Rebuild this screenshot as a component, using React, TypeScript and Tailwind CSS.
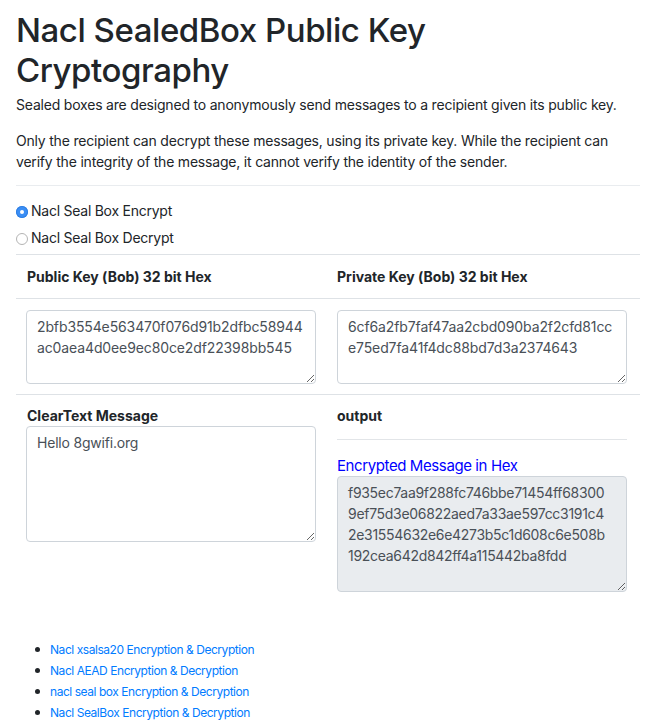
import React from 'react';

const publicKey = '2bfb3554e563470f076d91b2dfbc58944\nac0aea4d0ee9ec80ce2df22398bb545';
const privateKey = '6cf6a2fb7faf47aa2cbd090ba2f2cfd81cc\ne75ed7fa41f4dc88bd7d3a2374643';
const encrypted =
  'f935ec7aa9f288fc746bbe71454ff68300\n9ef75d3e06822aed7a33ae597cc3191c4\n2e31554632e6e4273b5c1d608c6e508b\n192cea642d842ff4a115442ba8fdd';

const links = [
  'Nacl xsalsa20 Encryption & Decryption',
  'Nacl AEAD Encryption & Decryption',
  'nacl seal box Encryption & Decryption',
  'Nacl SealBox Encryption & Decryption',
];

const areaCls =
  'block w-[290px] resize-y overflow-hidden rounded border border-[#ced4da] px-[10px] pt-[5px] pb-[6px] text-[14px] leading-[21px] text-[#495057] outline-none';

function Radio({ checked, label }: { checked?: boolean; label: string }) {
  return (
    <label className="flex h-[27px] items-center">
      {checked ? (
        <span className="mt-[2px] flex h-[12px] w-[12px] items-center justify-center rounded-full bg-[#3b8ef5] shadow-[inset_0_0_0_1px_#2f7fe3]">
          <span className="h-[4px] w-[4px] rounded-full bg-white" />
        </span>
      ) : (
        <span className="mt-[3px] h-[12px] w-[12px] rounded-full border border-[#b4b4b4] bg-white" />
      )}
      <span className="ml-[3px] tracking-[-0.25px]">{label}</span>
    </label>
  );
}

export default function App() {
  return (
    <div className="bg-white px-4 pt-[10px] pb-4 text-[14px] leading-[21px] text-[#212529] font-['Inter','Liberation_Sans',sans-serif]">
      <h1 className="text-[33px] leading-[40px] font-medium tracking-[-0.45px]">
        Nacl SealedBox Public Key Cryptography
      </h1>
      <p className="mt-[4px] tracking-[-0.2px]">
        Sealed boxes are designed to anonymously send messages to a recipient given its public key.
      </p>
      <p className="mt-[15px] tracking-[-0.2px]">
        Only the recipient can decrypt these messages, using its private key. While the recipient can
        verify the integrity of the message, it cannot verify the identity of the sender.
      </p>

      <div className="mt-[13px] border-t border-[#e9ecef] pt-[11px] pb-[3px]">
        <Radio checked label="Nacl Seal Box Encrypt" />
        <Radio label="Nacl Seal Box Decrypt" />
      </div>

      <div className="grid grid-cols-[309px_1fr] border-t border-[#dee2e6]">
        <div className="flex h-[43px] items-center pl-[11px] font-bold">Public Key (Bob) 32 bit Hex</div>
        <div className="flex h-[43px] items-center pl-3 font-bold">Private Key (Bob) 32 bit Hex</div>
      </div>

      <div className="grid grid-cols-[309px_1fr] border-t border-[#dee2e6] pt-[11px] pb-[10px]">
        <div className="pl-[10px]">
          <textarea
            wrap="off"
            className={`${areaCls} h-[74px] tracking-[-0.12px]`}
            defaultValue={publicKey}
          />
        </div>
        <div className="pl-3">
          <textarea
            wrap="off"
            className={`${areaCls} h-[74px] tracking-[-0.12px]`}
            defaultValue={privateKey}
          />
        </div>
      </div>

      <div className="grid grid-cols-[309px_1fr] border-t border-[#dee2e6] pt-[10px]">
        <div className="pl-[10px]">
          <div className="pl-[1px] font-bold">ClearText Message</div>
          <textarea className={`${areaCls} h-[116px] tracking-[-0.2px]`} defaultValue="Hello 8gwifi.org" />
        </div>
        <div className="pl-3">
          <div className="font-bold">output</div>
          <div className="mt-[13px] w-[290px] border-t border-[#e2e5e8]" />
          <div className="mt-[15px] text-[15px] tracking-[-0.4px] text-[#0000ff]">Encrypted Message in Hex</div>
          <textarea
            wrap="off"
            className={`${areaCls} h-[116px] bg-[#e9ecef] tracking-[-0.3px]`}
            readOnly
            defaultValue={encrypted}
          />
        </div>
      </div>

      <ul className="mt-[47px] pl-[19px] text-[12px] leading-[21px] tracking-[-0.45px]">
        {links.map((l) => (
          <li key={l} className="flex items-center">
            <span className="h-[5px] w-[5px] shrink-0 rounded-full bg-[#212529]" />
            <a href="#" className="ml-[10px] text-[#007bff]">
              {l}
            </a>
          </li>
        ))}
      </ul>
    </div>
  );
}
